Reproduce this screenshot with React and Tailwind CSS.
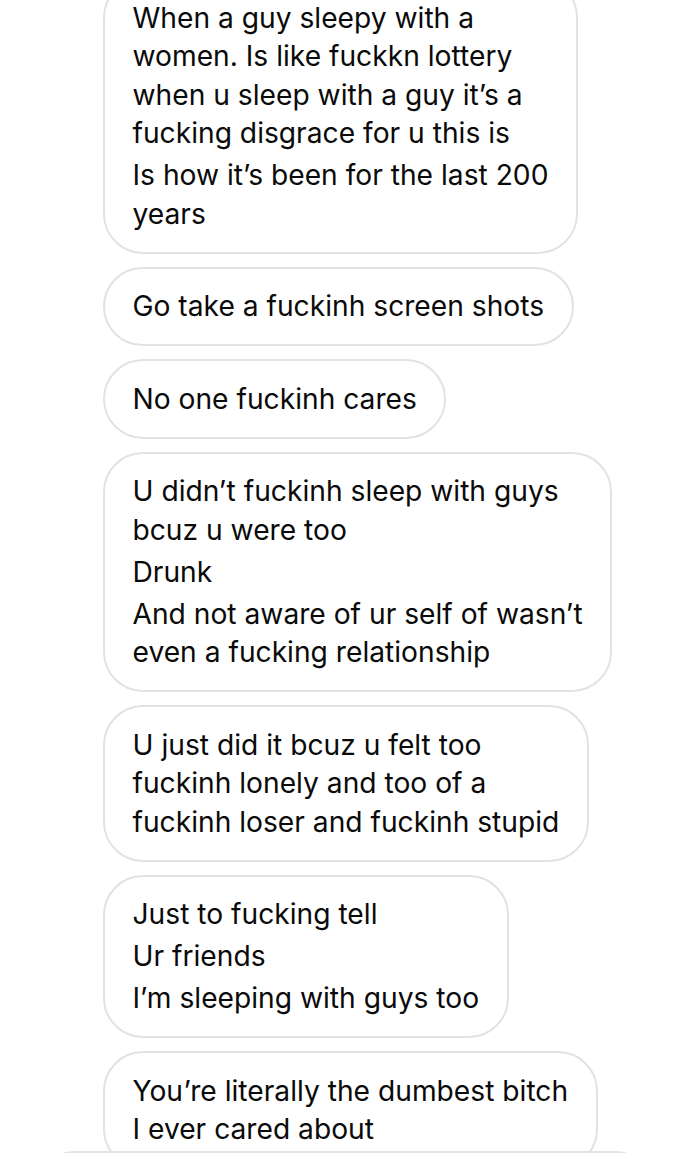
import React from 'react';

const messages = [
  [['When a guy sleepy with a', 'women. Is like fuckkn lottery', 'when u sleep with a guy it\u2019s a', 'fucking disgrace for u this is'], ['Is how it\u2019s been for the last 200', 'years']],
  [['Go take a fuckinh screen shots']],
  [['No one fuckinh cares']],
  [['U didn\u2019t fuckinh sleep with guys', 'bcuz u were too'], ['Drunk'], ['And not aware of ur self of wasn\u2019t', 'even a fucking relationship']],
  [['U just did it bcuz u felt too', 'fuckinh lonely and too of a', 'fuckinh loser and fuckinh stupid']],
  [['Just to fucking tell'], ['Ur friends'], ['I\u2019m sleeping with guys too']],
  [['You\u2019re literally the dumbest bitch', 'I ever cared about']],
];

const Bubble = ({ paragraphs }) => (
  <div className="border-2 border-[#e2e2e2] rounded-[40px] px-[27.5px] py-[18.5px] bg-white flex flex-col gap-[3.5px]">
    {paragraphs.map((lines, i) => (
      <div key={i} className="leading-[38.5px] whitespace-nowrap">
        {lines.map((l, j) => (
          <div key={j}>{l}</div>
        ))}
      </div>
    ))}
  </div>
);

export default function App() {
  return (
    <div
      className="relative w-[690px] h-[1153px] overflow-hidden bg-white text-[#0a0a0a] text-[28.2px]"
      style={{ fontFamily: 'Inter, "Noto Sans", sans-serif' }}
    >
      <div className="flex flex-col items-start gap-[13px] pl-[103px] -mt-[22px]">
        {messages.map((m, i) => (
          <Bubble key={i} paragraphs={m} />
        ))}
      </div>
      {/* input bar peeking at the bottom */}
      <div className="absolute left-[35px] right-[35px] top-[1151px] h-[80px] rounded-full border-2 border-[#e2e2e2] bg-white" />
    </div>
  );
}
